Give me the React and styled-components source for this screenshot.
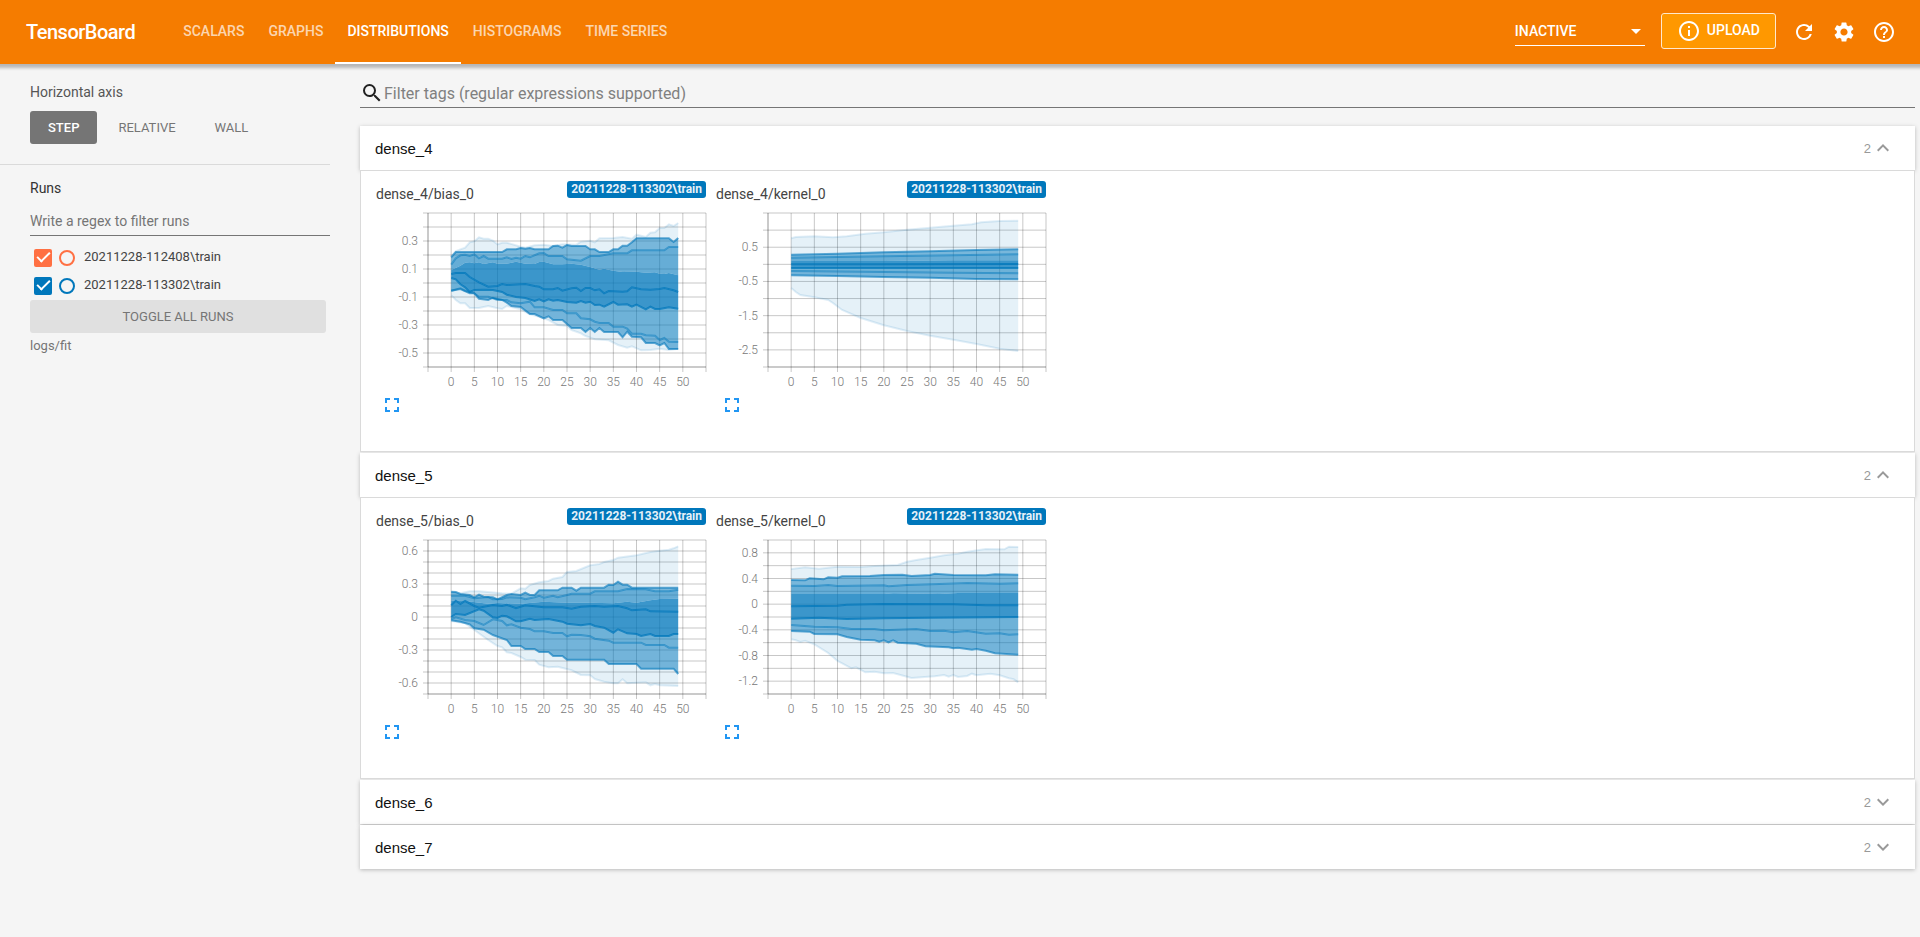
import { useState } from "react";
import styled, { createGlobalStyle, css } from "styled-components";
import {
  MdExpandLess,
  MdExpandMore,
  MdFullscreen,
  MdHelpOutline,
  MdInfoOutline,
  MdRefresh,
  MdSearch,
  MdSettings,
} from "react-icons/md";

const colors = {
  primary: "#f57c00",
  accent: "#ff9800",
  blue: "#0077bb",
  orange: "#ff7043",
  link: "#2196f3",
  background: "#f5f5f5",
  border: "#dadada",
  text: "#3c4043",
  muted: "#757575",
};

const GlobalStyle = createGlobalStyle`
  * {
    box-sizing: border-box;
  }
  body {
    margin: 0;
    background: ${colors.background};
    color: ${colors.text};
    font-family: Roboto, sans-serif;
    font-size: 14px;
  }
  button,
  input,
  select {
    font-family: inherit;
  }
  button {
    border: 0;
    padding: 0;
    background: none;
    cursor: pointer;
  }
`;

/* ---------- header ---------- */

const Toolbar = styled.header`
  position: relative;
  z-index: 1;
  display: flex;
  align-items: center;
  height: 64px;
  padding: 0 16px 0 26px;
  background: ${colors.primary};
  color: #fff;
  box-shadow: 0 1px 3px 3px rgba(0, 0, 0, 0.25);
`;

const Brand = styled.h1`
  margin: 0 36px 0 0;
  font-size: 20px;
  font-weight: 500;
  letter-spacing: -0.025em;
`;

const Nav = styled.nav`
  display: flex;
  flex: 1;
  height: 100%;
`;

const NavTab = styled.a`
  display: flex;
  align-items: center;
  padding: 0 12px;
  border-bottom: 2px solid transparent;
  color: rgba(255, 255, 255, 0.7);
  font-weight: 500;
  text-decoration: none;
  ${({ $active }) =>
    $active &&
    css`
      border-color: #fff;
      color: #fff;
    `}
`;

const SelectWrapper = styled.div`
  position: relative;
  width: 130px;
  margin: 0 16px 2px 0;
  border-bottom: 1px solid #fff;
  svg {
    position: absolute;
    right: 4px;
    top: 12px;
    pointer-events: none;
  }
`;

const HeaderSelect = styled.select`
  width: 100%;
  height: 28px;
  padding: 0;
  border: 0;
  appearance: none;
  background: transparent;
  color: #fff;
  font-size: 14px;
  font-weight: 500;
`;

const UploadButton = styled.button`
  display: flex;
  align-items: center;
  gap: 6px;
  height: 36px;
  margin: 0 8px 2px 0;
  padding: 0 15px;
  border: 1px solid #ffe9cc;
  border-radius: 3px;
  background: ${colors.accent};
  color: #fff;
  font-size: 14px;
  font-weight: 500;
  span {
    padding-bottom: 2px;
  }
`;

const IconButton = styled.button`
  display: flex;
  align-items: center;
  justify-content: center;
  width: 40px;
  height: 40px;
  color: #fff;
`;

/* ---------- sidebar ---------- */

const Layout = styled.div`
  display: flex;
`;

const Sidebar = styled.aside`
  flex: none;
  width: 360px;
`;

const SidebarSection = styled.section`
  width: 330px;
  padding: 20px 0 20px 30px;
  & + & {
    padding-top: 15px;
    border-top: 1px solid ${colors.border};
  }
`;

const SectionTitle = styled.h2`
  margin: 0 0 11px;
  font-size: 14px;
  line-height: 16px;
  font-weight: 400;
  color: ${({ $dark }) => ($dark ? "#333" : "#555")};
`;

const AxisOptions = styled.div`
  display: flex;
  gap: 3px;
`;

const AxisButton = styled.button`
  height: 33px;
  padding: 0 18px;
  border-radius: 3px;
  color: ${colors.muted};
  font-size: 13px;
  ${({ $active }) =>
    $active &&
    css`
      background: ${colors.muted};
      color: #fff;
      font-weight: 500;
    `}
`;

const RunsFilter = styled.input`
  display: block;
  width: 100%;
  height: 29px;
  margin: 0 0 13px;
  padding: 0;
  border: 0;
  border-bottom: 1px solid ${colors.muted};
  outline: 0;
  background: transparent;
  font-size: 14px;
  &::placeholder {
    color: ${colors.muted};
  }
`;

const RunRow = styled.div`
  display: flex;
  align-items: center;
  height: 18px;
  margin: 0 0 10px 4px;
`;

const RunCheckbox = styled.input`
  display: flex;
  justify-content: center;
  width: 18px;
  height: 18px;
  margin: 0;
  border-radius: 2px;
  appearance: none;
  background: ${({ $color }) => $color};
  &:checked::after {
    content: "";
    box-sizing: border-box;
    width: 7px;
    height: 13px;
    border: solid #fff;
    border-width: 0 2px 2px 0;
    transform: rotate(45deg);
  }
`;

const RunRadio = styled.input`
  width: 16px;
  height: 16px;
  margin: 0 9px 0 7px;
  border: 2px solid ${({ $color }) => $color};
  border-radius: 50%;
  appearance: none;
`;

const RunLabel = styled.label`
  font-size: 13px;
  line-height: 14px;
  padding-bottom: 3px;
  color: #444;
`;

const ToggleButton = styled.button`
  display: block;
  width: 296px;
  height: 33px;
  margin-top: -5px;
  border-radius: 3px;
  background: #e0e0e0;
  color: ${colors.muted};
  font-size: 13px;
`;

const LogDir = styled.p`
  margin: 5px 0 0;
  font-size: 13px;
  line-height: 15px;
  color: ${colors.muted};
`;

/* ---------- main ---------- */

const Main = styled.main`
  flex: 1;
  min-width: 0;
  padding: 14px 5px 20px 0;
`;

const TagFilter = styled.label`
  display: flex;
  align-items: center;
  height: 30px;
  margin-bottom: 18px;
  border-bottom: 1px solid ${colors.muted};
  color: #212121;
  input {
    flex: 1;
    padding: 2px 0 0;
    border: 0;
    outline: 0;
    background: transparent;
    font-size: 16px;
  }
  input::placeholder {
    color: #808080;
  }
`;

const Category = styled.section`
  margin-bottom: 1px;
`;

const CategoryHeader = styled.button`
  display: flex;
  align-items: center;
  width: 100%;
  height: 44px;
  padding: 0 20px 0 15px;
  background: #fff;
  box-shadow: 0 1px 4px rgba(0, 0, 0, 0.25);
  color: #111;
  font-family: "Liberation Sans", Arial, sans-serif;
  font-size: 15px;
  text-align: left;
`;

const CategoryName = styled.span`
  flex: 1;
`;

const CategoryCount = styled.span`
  display: flex;
  align-items: center;
  color: #999;
  font-size: 13px;
`;

const CategoryBody = styled.div`
  position: relative;
  display: flex;
  flex-wrap: wrap;
  gap: 10px;
  min-height: 282px;
  padding: 10px 15px 34px;
  border: 1px solid ${colors.border};
  background: #fff;
`;

const Card = styled.article`
  width: 330px;
`;

const CardHeader = styled.div`
  display: flex;
  justify-content: space-between;
  align-items: flex-start;
  height: 24px;
`;

const CardTitle = styled.h3`
  margin: 5px 0 0;
  font-size: 14px;
  line-height: 16px;
  font-weight: 400;
  color: #444;
`;

const RunBadge = styled.span`
  padding: 0 4px;
  border-radius: 3px;
  background: ${colors.blue};
  color: #e6f1f8;
  font-size: 12px;
  line-height: 17px;
  font-weight: 700;
`;

const ChartSvg = styled.svg`
  display: block;
  overflow: visible;
  text {
    fill: #777;
    font-size: 12px;
    font-weight: 300;
  }
`;

const ExpandButton = styled(IconButton)`
  width: 24px;
  height: 24px;
  margin: 8px 0 0 4px;
  color: ${colors.link};
`;

const PLOT = { left: 52, right: 330, top: 8, bottom: 162 };

// curves run from the maximum down to the minimum percentile,
// each one a list of "step:offset" with offsets on a 0-462 plot height
const distributions = {
  "dense_4/bias_0": {
    max: 0.5,
    min: -0.6,
    tick: 0.1,
    labels: [0.3, 0.1, -0.1, -0.3, -0.5],
    curves: [
      "0:129 1:114 3:104 4:88 5:85 6:73 7:77 8:77 9:83 10:94 11:89 12:89 15:101 16:104 18:97 20:95 22:99 24:94 27:95 28:86 30:83 31:88 32:76 35:75 37:72 39:77 40:65 42:72 43:59 44:58 45:45 46:45 47:34 48:39 49:30",
      "0:133 1:117 11:117 12:109 14:109 15:105 16:107 17:105 18:109 21:109 22:99 23:98 24:104 25:96 26:99 29:99 30:109 31:109 32:117 34:117 35:109 36:109 37:98 38:98 39:88 40:76 47:76 48:87 49:75",
      "0:155 1:136 2:127 3:125 4:129 5:124 6:136 7:129 8:137 11:137 12:133 13:138 14:134 15:137 16:129 17:133 19:121 20:120 21:129 24:129 25:139 27:142 28:143 30:129 32:129 35:121 38:121 39:112 46:112 47:102 49:102",
      "0:171 2:158 3:149 4:148 5:151 6:148 7:153 9:148 10:152 12:152 14:146 16:152 18:153 19:147 20:146 22:154 24:154 26:152 28:155 30:162 32:170 33:167 35:173 37:177 40:176 42:179 44:178 45:182 46:183 47:180 49:187",
      "0:183 1:180 3:180 4:192 6:208 8:221 10:219 11:213 12:216 16:213 18:219 19:221 20:229 22:229 23:225 24:233 26:226 27:224 28:234 29:225 30:225 31:232 32:229 33:241 34:234 37:236 38:235 39:223 41:229 43:230 45:228 46:225 48:232 49:237",
      "0:195 1:199 2:214 3:223 4:237 5:231 7:230 9:231 11:237 12:245 14:252 16:255 18:264 19:259 20:265 21:259 22:263 23:261 25:267 27:269 28:264 29:269 30:266 31:276 32:275 33:281 35:267 36:275 38:274 39:281 40:275 42:289 43:281 44:288 45:288 47:283 49:287",
      "0:233 2:226 3:233 5:241 6:251 8:251 10:261 12:261 13:268 15:271 17:266 18:283 20:283 22:291 24:291 25:301 27:301 28:316 30:319 31:326 32:330 34:330 35:341 37:341 38:347 39:362 41:362 42:367 44:368 45:381 46:375 47:386 49:387",
      "0:233 2:228 4:241 5:241 6:257 8:261 9:254 11:261 12:269 13:279 15:282 17:303 18:303 20:316 21:310 22:321 24:321 26:345 28:345 29:357 30:345 31:357 32:345 33:357 36:357 37:373 38:356 39:371 41:373 42:390 44:390 45:397 46:390 47:408 49:408",
      "0:247 1:261 2:271 3:271 4:285 6:285 8:279 10:286 11:288 12:279 15:289 17:304 19:311 21:321 23:336 25:339 26:351 28:361 29:369 31:379 34:382 36:396 38:404 39:400 41:412 43:411 45:407 47:411 49:407",
    ],
  },
  "dense_4/kernel_0": {
    max: 1.5,
    min: -3,
    tick: 0.5,
    labels: [0.5, -0.5, -1.5, -2.5],
    curves: [
      "0:76 1:72 5:70 9:73 12:70 16:62 20:58 25:50 30:44 35:38 39:34 41:28 45:24 49:23",
      "0:125 10:122 20:118 30:115 40:111 49:109",
      "0:134 20:130 35:127 49:124",
      "0:144 20:144 35:142 49:142",
      "0:154 20:154 49:153",
      "0:165 20:165 49:165",
      "0:174 20:177 35:179 49:181",
      "0:187 10:189 20:192 30:194 40:198 49:199",
      "0:225 1:237 2:246 5:253 8:261 9:270 11:291 15:315 20:337 25:354 30:368 35:380 40:393 45:407 49:414",
    ],
  },
  "dense_5/bias_0": {
    max: 0.7,
    min: -0.7,
    tick: 0.1,
    labels: [0.6, 0.3, 0, -0.3, -0.6],
    curves: [
      "0:156 2:160 4:154 6:154 11:160 13:161 15:145 16:146 17:135 19:127 21:123 22:116 24:111 25:96 27:93 30:76 32:72 33:66 35:60 36:53 40:46 43:36 45:32 47:29 48:25 49:19",
      "0:155 1:156 2:162 4:165 5:172 6:164 7:170 9:172 10:178 12:165 13:162 15:165 16:158 17:165 18:165 19:151 23:151 24:143 26:143 27:152 28:143 33:143 34:134 35:135 36:125 37:134 38:134 39:143 49:143",
      "0:167 3:167 5:175 8:171 9:178 11:177 12:172 15:173 16:178 18:172 19:167 20:173 22:167 23:172 25:165 26:161 30:161 31:154 36:154 38:147 42:148 44:154 47:154 49:149",
      "0:182 3:183 8:191 10:189 15:191 20:185 25:188 30:188 35:190 38:185 40:188 43:181 45:177 49:176",
      "0:196 1:182 2:192 3:183 5:198 6:203 9:195 11:198 12:194 14:205 16:196 20:202 24:202 26:206 28:200 31:198 33:200 36:198 38:205 39:211 42:208 43:214 49:215",
      "0:231 1:222 3:225 6:208 7:212 9:232 10:234 11:227 12:229 14:244 15:244 17:236 18:240 21:237 24:245 25:251 28:256 30:252 31:258 33:263 35:278 36:268 38:280 40:282 41:288 43:282 44:288 47:288 48:282 49:282",
      "0:237 1:232 3:240 5:243 7:255 9:238 11:243 12:256 13:253 15:263 17:267 18:274 20:274 22:279 24:279 25:289 26:284 28:285 30:289 31:296 34:302 35:308 41:308 42:315 46:315 47:323 49:323",
      "0:241 2:245 4:253 5:265 7:269 9:285 12:300 13:318 15:318 16:327 18:327 19:336 21:336 22:348 24:348 25:359 33:359 34:372 40:372 41:386 48:386 49:402",
      "0:243 3:250 5:270 8:300 10:318 11:322 12:337 13:339 15:351 16:359 18:360 19:374 21:382 23:380 26:391 28:405 30:406 31:417 33:425 35:430 36:430 37:418 38:430 42:427 43:436 44:432 45:436 49:438",
    ],
  },
  "dense_5/kernel_0": {
    max: 1,
    min: -1.4,
    tick: 0.2,
    labels: [0.8, 0.4, 0, -0.4, -0.8, -1.2],
    curves: [
      "0:87 3:82 6:86 10:80 15:81 18:78 23:75 25:65 27:60 30:53 33:46 36:41 38:35 42:27 46:28 47:20 49:21",
      "0:120 3:121 4:115 7:118 8:112 10:113 11:109 17:108 20:105 24:104 26:108 30:105 31:101 35:105 42:106 44:103 49:104",
      "0:137 5:138 8:135 10:138 20:136 21:139 25:135 32:132 38:129 45:131 49:130",
      "0:162 20:162 22:160 32:162 36:159 49:159",
      "0:199 10:197 12:194 20:192 35:193 42:196 49:196",
      "0:236 6:233 12:237 20:235 30:233 49:231",
      "0:255 5:260 10:262 13:267 18:267 20:271 27:267 30:273 33:272 35:277 38:273 42:281 45:280 47:284 49:283",
      "0:273 4:275 5:282 10:283 12:291 15:299 18:301 19:305 20:301 21:307 22:301 23:308 27:311 29:319 34:322 35:325 36:323 39:329 40:327 42:332 44:340 49:344",
      "0:298 1:301 2:306 3:302 5:313 8:339 10:363 13:385 14:382 16:397 18:395 20:400 22:399 25:410 26:414 31:409 33:405 34:410 35:405 36:411 38:408 39:401 40:406 43:401 45:406 47:415 48:418 49:427",
    ],
  },
};

const bandOpacity = [0.1, 0.53, 0.6, 0.77, 0.77, 0.57, 0.55, 0.1];
const lineOpacity = [0.12, 0.6, 0.5, 0, 0.75, 0.75, 0.5, 0.6, 0.12];

const stepToX = (step) =>
  PLOT.left + ((step + 5) / 60) * (PLOT.right - PLOT.left);

const parseCurve = (curve) =>
  curve.split(" ").map((pair) => {
    const [step, offset] = pair.split(":").map(Number);
    return `${stepToX(step).toFixed(1)},${(PLOT.top + offset / 3).toFixed(1)}`;
  });

const steps = [0, 5, 10, 15, 20, 25, 30, 35, 40, 45, 50];

const DistributionChart = ({ tag }) => {
  const { max, min, tick, labels, curves } = distributions[tag];
  const lines = curves.map(parseCurve);
  const height = PLOT.bottom - PLOT.top;
  const valueToY = (value) => PLOT.top + ((max - value) / (max - min)) * height;
  const rows = Array.from(
    { length: Math.round((max - min) / tick) + 1 },
    (_, i) => valueToY(max - i * tick),
  );

  return (
    <ChartSvg width="330" height="180" role="img" aria-label={tag}>
      <g stroke="#000" strokeOpacity="0.22">
        {rows.map((y) => (
          <line key={y} x1={PLOT.left - 5} x2={PLOT.right} y1={y} y2={y} />
        ))}
        {[-5, ...steps, 55].map((step) => (
          <line
            key={step}
            x1={stepToX(step)}
            x2={stepToX(step)}
            y1={PLOT.top}
            y2={PLOT.bottom + 5}
          />
        ))}
        <path
          d={`M${PLOT.left} ${PLOT.top}V${PLOT.bottom}H${PLOT.right}`}
          fill="none"
        />
      </g>
      <g fill={colors.blue}>
        {bandOpacity.map((opacity, i) => (
          <polygon
            key={i}
            points={[...lines[i], ...[...lines[i + 1]].reverse()].join(" ")}
            fillOpacity={opacity}
          />
        ))}
      </g>
      <g fill="none" stroke={colors.blue} strokeWidth="2">
        {lines.map((points, i) => (
          <polyline
            key={i}
            points={points.join(" ")}
            strokeOpacity={lineOpacity[i]}
          />
        ))}
      </g>
      <g textAnchor="end">
        {labels.map((value) => (
          <text key={value} x="42" y={valueToY(value) + 4}>
            {value}
          </text>
        ))}
      </g>
      <g textAnchor="middle">
        {steps.map((step) => (
          <text key={step} x={stepToX(step)} y="181">
            {step}
          </text>
        ))}
      </g>
    </ChartSvg>
  );
};

const tabs = ["SCALARS", "GRAPHS", "DISTRIBUTIONS", "HISTOGRAMS", "TIME SERIES"];
const axes = ["STEP", "RELATIVE", "WALL"];
const runs = [
  { name: "20211228-112408\\train", color: colors.orange },
  { name: "20211228-113302\\train", color: colors.blue },
];
const categories = [
  { name: "dense_4", open: true },
  { name: "dense_5", open: true },
  { name: "dense_6", open: false },
  { name: "dense_7", open: false },
];

const Header = () => (
  <Toolbar>
    <Brand>TensorBoard</Brand>
    <Nav>
      {tabs.map((tab) => (
        <NavTab key={tab} href="#" $active={tab === "DISTRIBUTIONS"}>
          {tab}
        </NavTab>
      ))}
    </Nav>
    <SelectWrapper>
      <HeaderSelect aria-label="Inactive dashboards">
        <option>INACTIVE</option>
      </HeaderSelect>
      <svg width="10" height="5" viewBox="0 0 10 5">
        <path d="M0 0h10L5 5z" fill="#fff" />
      </svg>
    </SelectWrapper>
    <UploadButton>
      <MdInfoOutline size={24} />
      <span>UPLOAD</span>
    </UploadButton>
    <IconButton aria-label="Reload">
      <MdRefresh size={24} />
    </IconButton>
    <IconButton aria-label="Settings">
      <MdSettings size={24} />
    </IconButton>
    <IconButton aria-label="Help">
      <MdHelpOutline size={24} />
    </IconButton>
  </Toolbar>
);

const RunSelector = () => (
  <Sidebar>
    <SidebarSection>
      <SectionTitle>Horizontal axis</SectionTitle>
      <AxisOptions>
        {axes.map((axis) => (
          <AxisButton key={axis} $active={axis === "STEP"}>
            {axis}
          </AxisButton>
        ))}
      </AxisOptions>
    </SidebarSection>
    <SidebarSection>
      <SectionTitle $dark>Runs</SectionTitle>
      <RunsFilter
        aria-label="Filter runs"
        placeholder="Write a regex to filter runs"
      />
      {runs.map(({ name, color }) => (
        <RunRow key={name}>
          <RunCheckbox type="checkbox" id={name} defaultChecked $color={color} />
          <RunRadio type="radio" name="run" aria-label={name} $color={color} />
          <RunLabel htmlFor={name}>{name}</RunLabel>
        </RunRow>
      ))}
      <ToggleButton>TOGGLE ALL RUNS</ToggleButton>
      <LogDir>logs/fit</LogDir>
    </SidebarSection>
  </Sidebar>
);

const TagCard = ({ tag }) => (
  <Card>
    <CardHeader>
      <CardTitle>{tag}</CardTitle>
      <RunBadge>{runs[1].name}</RunBadge>
    </CardHeader>
    <DistributionChart tag={tag} />
    <ExpandButton aria-label="Toggle full size">
      <MdFullscreen size={24} />
    </ExpandButton>
  </Card>
);

const CategoryPane = ({ name, open }) => {
  const [opened, setOpened] = useState(open);

  return (
    <Category>
      <CategoryHeader aria-expanded={opened} onClick={() => setOpened(!opened)}>
        <CategoryName>{name}</CategoryName>
        <CategoryCount>
          2{opened ? <MdExpandLess size={24} /> : <MdExpandMore size={24} />}
        </CategoryCount>
      </CategoryHeader>
      {opened && (
        <CategoryBody>
          {["bias_0", "kernel_0"]
            .map((part) => `${name}/${part}`)
            .filter((tag) => distributions[tag])
            .map((tag) => (
              <TagCard key={tag} tag={tag} />
            ))}
        </CategoryBody>
      )}
    </Category>
  );
};

const App = () => (
  <>
    <GlobalStyle />
    <Header />
    <Layout>
      <RunSelector />
      <Main>
        <TagFilter>
          <MdSearch size={24} />
          <input placeholder="Filter tags (regular expressions supported)" />
        </TagFilter>
        {categories.map((category) => (
          <CategoryPane key={category.name} {...category} />
        ))}
      </Main>
    </Layout>
  </>
);

export default App;
